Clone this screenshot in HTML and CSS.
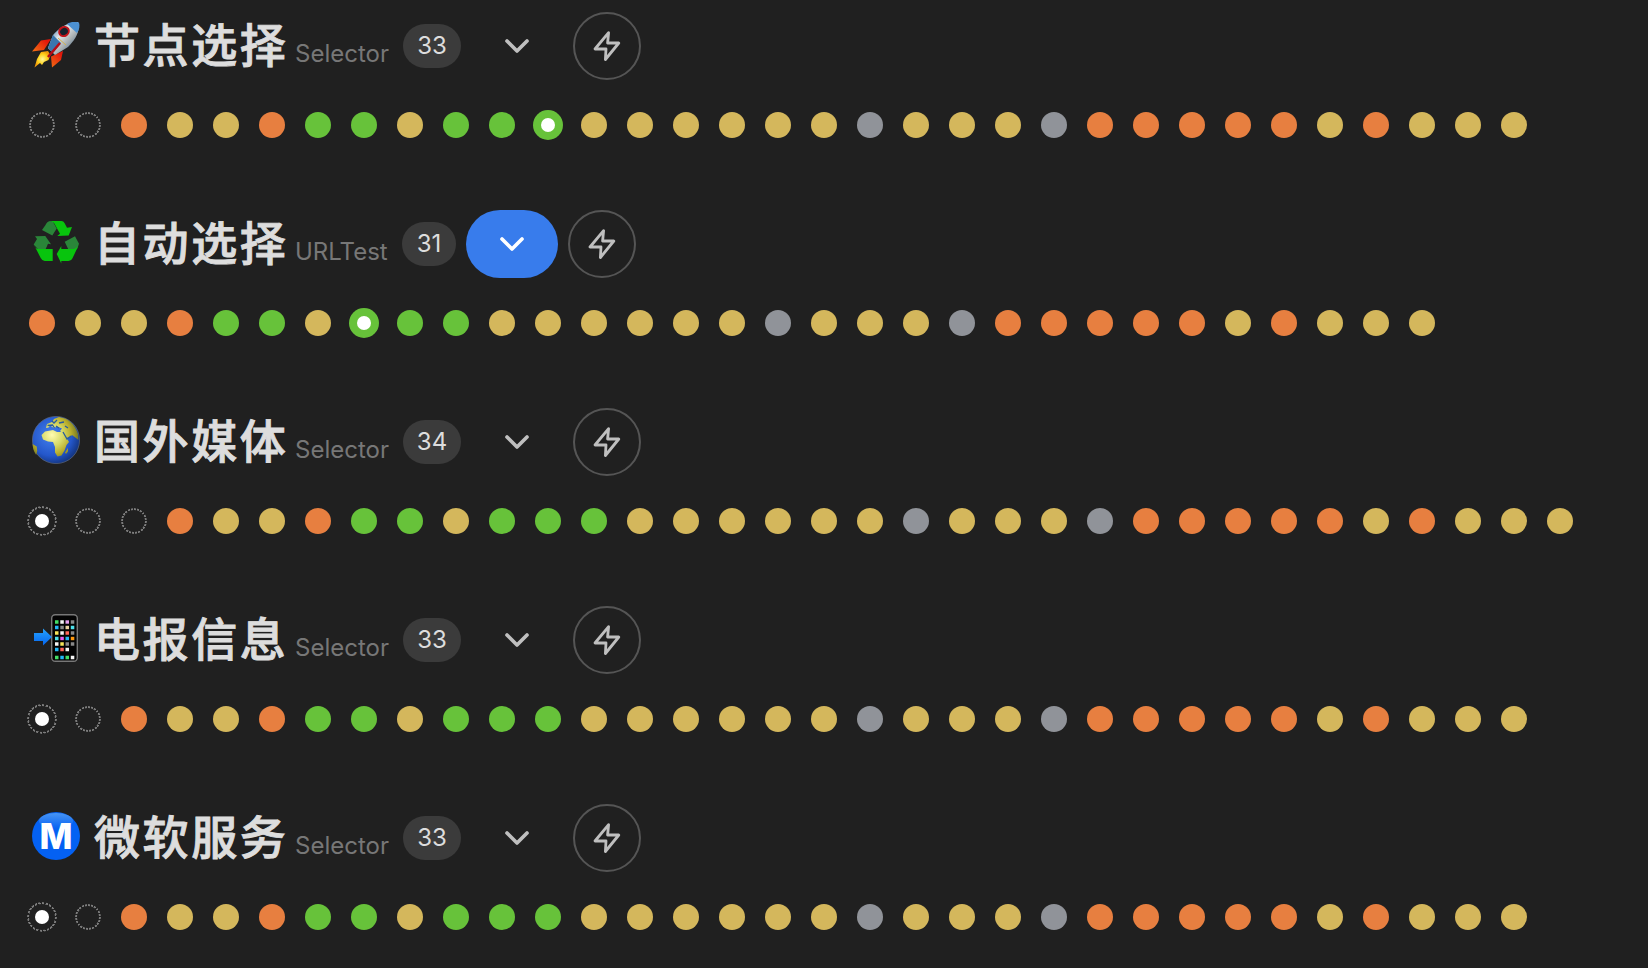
FILE: index.html
```html
<!DOCTYPE html>
<html lang="zh-CN">
<head>
<meta charset="utf-8">
<title>Proxies</title>
<link rel="stylesheet" href="styles.css">
</head>
<body>
<svg class="defs" width="0" height="0" aria-hidden="true">
  <symbol id="chevron" viewBox="0 0 24 24"><path d="M6 9l6 6 6-6"/></symbol>
  <symbol id="zap" viewBox="0 0 34 34"><path d="M18.600 3.700L5 20h11l-.6 10.500L28.800 14H17.600z"/></symbol>
</svg>
<main class="groups">
  <section class="group">
    <header class="head">
      <svg class="emoji" viewBox="0 0 48 48">
        <defs>
          <linearGradient id="hull" x1="0" y1="0" x2="1" y2="1"><stop offset=".15" stop-color="#3f75a8"/><stop offset=".4" stop-color="#e3e8ea"/><stop offset=".62" stop-color="#aab0b2"/><stop offset=".85" stop-color="#496c8c"/></linearGradient>
          <linearGradient id="fin" x1="1" y1="0" x2="0" y2="1"><stop offset=".3" stop-color="#e3170a"/><stop offset="1" stop-color="#ffb01c"/></linearGradient>
          <radialGradient id="flame"><stop offset="0" stop-color="#fff79a"/><stop offset=".6" stop-color="#ffd21c"/><stop offset="1" stop-color="#f19a0b"/></radialGradient>
        </defs>
        <path fill="url(#fin)" d="M19 19L9 20.500 0 31.500l12-1.500zM31 31l-2 9-9 7.500-1-11z"/>
        <path fill="url(#flame)" d="M9 32l7-1 2.500 4-2 5-4.500 2-2 3-2-2-5.500 4.500 2.500-8.500z"/>
        <path fill="url(#hull)" d="M46 2C35 2 26 9 21 15l-5 13 7 7 13-8C42 21 49 12 46 2z"/>
        <path fill="#4c91d2" d="M47 2.500c-5-1-9-.5-12 1.500l10 9c2.500-4 3-7 2-10.500z"/>
        <path fill="#3976ae" d="M21 15l-5 13 5 5 8-10z"/>
        <path stroke="#d3b34e" stroke-width="1" fill="none" d="M26 18l8 7"/>
        <path stroke="#b70c15" stroke-width="2.500" d="M28 23L16 37"/>
        <ellipse cx="32" cy="11.500" rx="5" ry="4.400" fill="#17222d" stroke="#c3141b" stroke-width="2" transform="rotate(-35 32 11.500)"/>
      </svg>
      <h2 class="name">节点选择</h2><span class="type">Selector</span><span class="count">33</span>
      <button class="toggle"><svg class="ico"><use href="#chevron"/></svg></button>
      <button class="test"><svg class="ico"><use href="#zap"/></svg></button>
    </header>
    <div class="dots" data-nodes="nnoyyoggyggGyyyyyyxyyyxoooooyoyyy"></div>
  </section>

  <section class="group">
    <header class="head">
      <svg class="emoji" viewBox="0 0 48 48">
        <path fill="#08c40d" d="M18 3h11.500q2 0 3 2l2.500 4.700 5-.7-3.300 8.500L25.300 18l2.700-2.300L22 5z"/>
        <path fill="#2a8539" d="M18 3q-3 .5-4.500 4L10 12l10.300 5.500 4.400-7L21 4z"/>
        <path fill="#2a8539" d="M3 18.300L13.300 18 19 26.300l-3-.6-2.300 5.300-7 1-5-5.500 3.300-5.500zM32.700 23.700L43 18.300l4 7.500-2 5.500-8.500.5z"/>
        <path fill="#08c40d" d="M1.700 26.300Q3 31 7 31h13.700v12h-8q-2.500 0-4-3zM24.700 36l4.600-8v3h11q5 0 6.700-4.700l-6.500 14q-1 2.700-4 2.700h-7.200v2.500z"/>
      </svg>
      <h2 class="name">自动选择</h2><span class="type type-url">URLTest</span><span class="count count-narrow">31</span>
      <button class="toggle toggle-on"><svg class="ico"><use href="#chevron"/></svg></button>
      <button class="test"><svg class="ico"><use href="#zap"/></svg></button>
    </header>
    <div class="dots" data-nodes="oyyoggyGggyyyyyyxyyyxoooooyoyyy"></div>
  </section>

  <section class="group">
    <header class="head">
      <svg class="emoji" viewBox="0 0 48 48">
        <defs>
          <radialGradient id="sea" cx=".4" cy=".4" r=".62"><stop offset="0" stop-color="#4380ee"/><stop offset=".7" stop-color="#2457cb"/><stop offset="1" stop-color="#143785"/></radialGradient>
          <radialGradient id="land" gradientUnits="userSpaceOnUse" cx="20" cy="19" r="27"><stop offset="0" stop-color="#fffbb0"/><stop offset=".4" stop-color="#d7da68"/><stop offset=".7" stop-color="#b9ae2c"/><stop offset="1" stop-color="#6f7423"/></radialGradient>
        </defs>
        <circle cx="24" cy="24" r="23.600" fill="url(#sea)" stroke="#5b6881" stroke-width=".7"/>
        <path fill="url(#land)" d="M13 15.500l8-1.500 4 2 6 0 2.500 3.500 3.500 6.500-2.500 3-2 5.500-3 5-4 1-2.500-4 0-5.500-2-5-5-.5-5-2-1.500-4.500z"/>
        <path fill="url(#land)" d="M14 12l1-4 5-2 2-3 5-2 6 1.500c6 2.500 11 8.500 13 15.500l.5 6-2.500-2-4-3-2 2-4 1-2-4-4-3 2-2.500-5-2-3 1.500-4-2.500-1.500 2zM36 32l-3 4.500 1 1.500 2-2.500zM.7 28l4 2.500.5 4.500-1 4C1.700 35.500.7 32 .7 28z"/>
        <path fill="none" stroke="#285c9e" stroke-width="1.300" d="M15.500 9.500l5-.5 2 3M24 10l3 2M27 7l5-1M20 5l2 2 3-3M31 16l4 7 4-3M33 10l3 2"/>
      </svg>
      <h2 class="name">国外媒体</h2><span class="type">Selector</span><span class="count">34</span>
      <button class="toggle"><svg class="ico"><use href="#chevron"/></svg></button>
      <button class="test"><svg class="ico"><use href="#zap"/></svg></button>
    </header>
    <div class="dots" data-nodes="Nnnoyyoggygggyyyyyyxyyyxoooooyoyyy"></div>
  </section>

  <section class="group">
    <header class="head">
      <svg class="emoji" viewBox="0 0 48 48">
        <defs><linearGradient id="arrow" x2="0" y2="1"><stop stop-color="#26a3ff"/><stop offset="1" stop-color="#0565ee"/></linearGradient></defs>
        <rect x="19.700" y=".7" width="25.600" height="46.600" rx="3.500" fill="#030303" stroke="#777" stroke-width="1.400"/>
        <path fill="url(#arrow)" d="M2 19h9v-4.500l9 8.500-9 8.500v-4.500H2z"/>
        <g stroke-width="3.400">
          <path stroke="#43dd65" d="M23 8h3.500M33.500 43.500h3.500M23 43.500h3.500"/>
          <path stroke="#f4f4f4" d="M28.300 8h3.500M28.300 19h3.500M23 30h3.500M33.500 35.500h3.500M38.800 43.500h3.500"/>
          <path stroke="#e6a0ef" d="M33.500 8h3.500"/><path stroke="#888" d="M38.800 8h3.500M28.300 13.500h3.500M38.800 19h3.500M33.500 30h3.500M38.800 30h3.500"/>
          <path stroke="#24b6f5" d="M23 13.500h3.500M33.500 24.500h3.500M23 35.500h3.500M28.300 43.500h3.500"/>
          <path stroke="#e9d2a1" d="M33.500 13.500h3.500"/><path stroke="#4de1eb" d="M38.800 13.500h3.500M23 24.500h3.500"/>
          <path stroke="#f8e65a" d="M23 19h3.500M28.300 30h3.500"/><path stroke="#ff6658" d="M33.500 19h3.500M28.300 35.500h3.500"/>
          <path stroke="#e65bf2" d="M28.300 24.500h3.500"/><path stroke="#ff980d" d="M38.800 24.500h3.500"/>
        </g>
      </svg>
      <h2 class="name">电报信息</h2><span class="type">Selector</span><span class="count">33</span>
      <button class="toggle"><svg class="ico"><use href="#chevron"/></svg></button>
      <button class="test"><svg class="ico"><use href="#zap"/></svg></button>
    </header>
    <div class="dots" data-nodes="NnoyyoggygggyyyyyyxyyyxoooooyoyyyEND"></div>
  </section>

  <section class="group">
    <header class="head">
      <svg class="emoji" viewBox="0 0 48 48">
        <defs><linearGradient id="shine" x2="0" y2="1"><stop stop-color="#5ea6f5"/><stop offset="1" stop-color="#0461f3"/></linearGradient></defs>
        <circle cx="24" cy="24" r="24" fill="#0461f3"/>
        <ellipse cx="24" cy="9" rx="17" ry="8" fill="url(#shine)" opacity=".75"/>
        <text class="metro" x="24" y="37" text-anchor="middle">M</text>
      </svg>
      <h2 class="name">微软服务</h2><span class="type">Selector</span><span class="count">33</span>
      <button class="toggle"><svg class="ico"><use href="#chevron"/></svg></button>
      <button class="test"><svg class="ico"><use href="#zap"/></svg></button>
    </header>
    <div class="dots" data-nodes="NnoyyoggygggyyyyyyxyyyxoooooyoyyyEND"></div>
  </section>
</main>
<script src="dots.js"></script>
</body>
</html>
```
FILE: styles.css
```css
* { box-sizing: border-box; }
body {
  margin: 0;
  background: #202020;
  color: #ddd;
  font-family: Inter, "Noto Sans CJK SC", sans-serif;
  overflow: hidden;
}
.defs { display: none; }
.groups { display: flex; flex-direction: column; gap: 70px; padding: 12px 27px 0; }
.group { display: flex; flex-direction: column; gap: 30px; height: 128px; }
.head { display: flex; align-items: center; height: 68px; padding-left: 5px; }
.emoji { flex: none; width: 48px; height: 48px; margin-bottom: 4px; }
.name {
  width: 201px;
  margin: 0 0 9px 14px;
  font: 500 46px/68px "Noto Sans CJK SC", sans-serif;
  letter-spacing: 2.600px;
  white-space: nowrap;
  -webkit-text-stroke: .9px #ddd;
}
.type { width: 108px; padding-top: 16px; font-size: 24px; line-height: 32px; color: #777; }
.type-url { width: 107px; }
.count {
  width: 58px;
  height: 44px;
  border-radius: 22px;
  background: #3b3b3b;
  font-size: 24px;
  line-height: 43px;
  text-align: center;
}
.count-narrow { width: 54px; }
.toggle, .test {
  display: flex;
  align-items: center;
  justify-content: center;
  height: 68px;
  margin: 0 0 0 10px;
  padding: 0;
  border: 0;
  border-radius: 34px;
  background: none;
  color: #bfbfbf;
}
.toggle { width: 92px; }
.toggle-on { background: #387cec; color: #fff; }
.test { width: 68px; border: 2px solid #555; }
.ico { width: 34px; height: 34px; fill: none; stroke: currentColor; stroke-width: 2.800; stroke-linecap: round; stroke-linejoin: round; }
.toggle .ico { width: 40px; height: 40px; stroke-width: 2.200; }
.metro { font: 800 35px Inter, sans-serif; fill: #fff; }
.dots { display: flex; align-items: center; gap: 16px; height: 30px; }
.dot { position: relative; display: flex; align-items: center; justify-content: center; width: 26px; height: 26px; margin: 0 2px; border-radius: 50%; }
.dot-o { background: #e77f40; }
.dot-y { background: #d4b75c; }
.dot-g { background: #67c23a; }
.dot-x { background: #909399; }
.dot-n::before {
  content: "";
  position: absolute;
  inset: 0;
  border: 2px solid #7c7c7c;
  border-radius: 50%;
  -webkit-mask: repeating-conic-gradient(#000 0 9deg, transparent 9deg 15deg);
  mask: repeating-conic-gradient(#000 0 9deg, transparent 9deg 15deg);
}
.dot-now { width: 30px; height: 30px; margin: 0; }
.dot-now::after { content: ""; width: 14px; height: 14px; border-radius: 50%; background: #fff; }
```
FILE: dots.js
```js
// One letter per node; an uppercase letter marks the node in use, END closes a list.
document.querySelectorAll('.dots').forEach(function (row) {
  row.dataset.nodes.replace('END', '').split('').forEach(function (c) {
    var dot = document.createElement('span');
    dot.className = 'dot dot-' + c.toLowerCase() + (c < 'a' ? ' dot-now' : '');
    row.appendChild(dot);
  });
});
```
